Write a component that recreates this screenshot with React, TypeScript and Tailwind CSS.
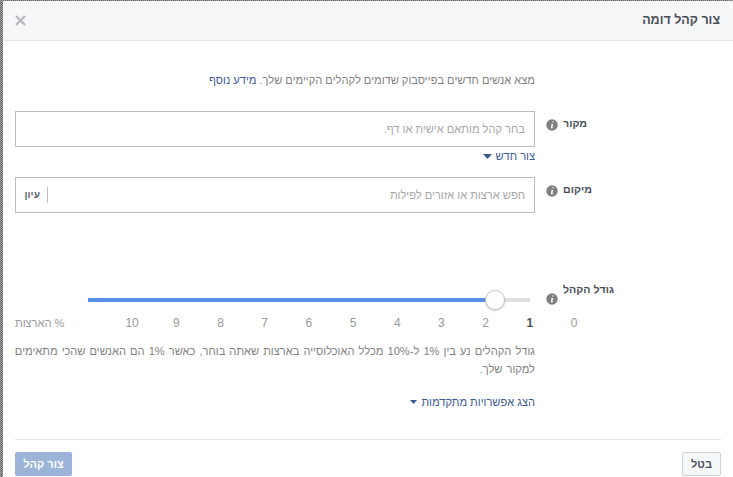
const font = "font-['Liberation_Sans',Arial,sans-serif]";

function Info() {
  return (
    <svg width="12" height="12" viewBox="0 0 12 12" className="shrink-0">
      <circle cx="6" cy="6" r="5.7" fill="#7f7f7f" />
      <path d="M6.6 2.3h1.2l-.3 1.3H6.3zM5 4.9h2.2L6.4 8.3c-.1.4.3.4.9.1l-.1.6c-1 .6-2.4.6-2.2-.6l.6-2.9H4.9z" fill="#fff" />
    </svg>
  );
}

function Caret({ w = 9, h = 5, c = "#3b5998" }: { w?: number; h?: number; c?: string }) {
  return (
    <svg width={w} height={h} viewBox="0 0 9 5" className="shrink-0">
      <path d="M0 0h9L4.5 5z" fill={c} />
    </svg>
  );
}

function Row({ label, top, children }: { label: string; top: string; children: React.ReactNode }) {
  return (
    <div className="flex items-start">
      <div className="w-[520px] shrink-0">{children}</div>
      <div className={`ml-[11px] flex items-start ${top}`}>
        <Info />
        <span dir="rtl" className="ml-[5px] -mt-[4px] text-[10.7px] font-bold leading-[16px] text-[#4b4f56]">{label}</span>
      </div>
    </div>
  );
}

export default function App() {
  const nums = ["10", "9", "8", "7", "6", "5", "4", "3", "2", "1", "0"];
  return (
    <div className={`${font} w-[733px] h-[477px] overflow-hidden bg-[repeating-conic-gradient(#666666_0_25%,#a8a8a8_0_50%)] bg-[length:2px_2px] pt-px pl-[3px]`}>
      <div className="h-[476px] bg-white flex flex-col">
        <div className="h-[39px] shrink-0 flex items-center justify-between pl-[12px] pr-[13px] bg-[#f6f7f9] border-b border-[#e5e5e5] box-content">
          <svg width="11" height="11" viewBox="0 0 11 11">
            <path d="M1 1l9 9M10 1l-9 9" stroke="#b4b7bd" strokeWidth="2.2" />
          </svg>
          <span dir="rtl" className="text-[12.5px] font-bold text-[#4b4f56]">צור קהל דומה</span>
        </div>

        <div className="flex-1 pl-[12px] pr-[12px] flex flex-col">
          <div dir="rtl" className="mt-[31px] w-[520px] h-[16px] text-[11.1px] leading-[16px] text-[#7f7f7f] whitespace-nowrap">
            מצא אנשים חדשים בפייסבוק שדומים לקהלים הקיימים שלך. <span className="text-[#3b5998]">מידע נוסף</span>
          </div>

          <div className="mt-[23px]">
            <Row label="מקור" top="mt-[8px]">
              <div dir="rtl" className="h-[36px] border border-[#bdbdbd] flex items-center pr-[9px] text-[11.1px] text-[#a6a6a6]">
                בחר קהל מותאם אישית או דף.
              </div>
              <div dir="rtl" className="h-[20px] -mt-[1px] flex items-center gap-[4px] text-[11.1px] text-[#3b5998]">
                צור חדש
                <Caret />
              </div>
            </Row>
          </div>

          <div className="mt-[11px]">
            <Row label="מיקום" top="mt-[8px]">
              <div className="h-[36px] border border-[#bdbdbd] flex items-center text-[11.1px]">
                <span dir="rtl" className="ml-[9px] mr-[7px] w-[15px] text-[10.2px] font-bold text-[#5f6368] whitespace-nowrap">עיון</span>
                <span className="h-[16px] w-px bg-[#bdbdbd]" />
                <span dir="rtl" className="flex-1 pr-[9px] text-[#a6a6a6]">חפש ארצות או אזורים לפילות</span>
              </div>
            </Row>
          </div>

          <div className="mt-[68px] flex items-start">
            <div className="w-[520px] shrink-0 pl-[73px] h-[37px] pt-[17px] pr-[5px]">
              <div className="relative h-[4px] bg-[#dddfe2]">
                <div className="h-[4px] w-[407px] bg-[#5890e5]" />
                <div className="absolute left-[397px] top-[-8px] w-[20px] h-[20px] rounded-full bg-white border border-[#c4c6ca] shadow-[0_1px_2px_rgba(0,0,0,0.2)]" />
              </div>
            </div>
            <div className="ml-[11px] mt-[12px] flex items-start">
              <Info />
              <span dir="rtl" className="ml-[5px] -mt-[12px] text-[10.7px] font-bold leading-[16px] text-[#4b4f56]">גודל הקהל</span>
            </div>
          </div>

          <div className="flex items-center h-[16px] -mt-[3px] text-[12px] leading-[16px] text-[#999999]">
            <span dir="rtl" className="w-[95px] shrink-0 text-left text-[11.1px]">% הארצות</span>
            {nums.map((n) => (
              <span key={n} className={`w-[44.2px] shrink-0 text-center ${n === "1" ? "font-bold text-[#4b4f56]" : ""}`}>{n}</span>
            ))}
          </div>

          <p dir="rtl" className="mt-[11px] w-[520px] text-[11.1px] leading-[18px] text-[#7f7f7f] [word-spacing:1px] whitespace-nowrap">
            גודל הקהלים נע בין 1% ל-10% מכלל האוכלוסייה בארצות שאתה בוחר, כאשר 1% הם האנשים שהכי מתאימים
            <br />
            למקור שלך.
          </p>

          <div dir="rtl" className="mt-[16px] w-[520px] h-[16px] flex items-center gap-[4px] text-[11.1px] text-[#3b5998]">
            הצג אפשרויות מתקדמות
            <Caret w={7} h={4} />
          </div>

          <div className="mt-[29px] h-px bg-[#e5e5e5]" />

          <div className="mt-[12px] flex justify-between">
            <button dir="rtl" className="w-[57px] h-[24px] rounded-[2px] bg-[#9cb4d8] border border-[#9cb4d8] text-[11px] font-bold text-white">צור קהל</button>
            <button dir="rtl" className="w-[39px] h-[24px] rounded-[2px] bg-[#f6f7f9] border border-[#ced0d4] text-[11px] font-bold text-[#4b4f56]">בטל</button>
          </div>
        </div>
      </div>
    </div>
  );
}
